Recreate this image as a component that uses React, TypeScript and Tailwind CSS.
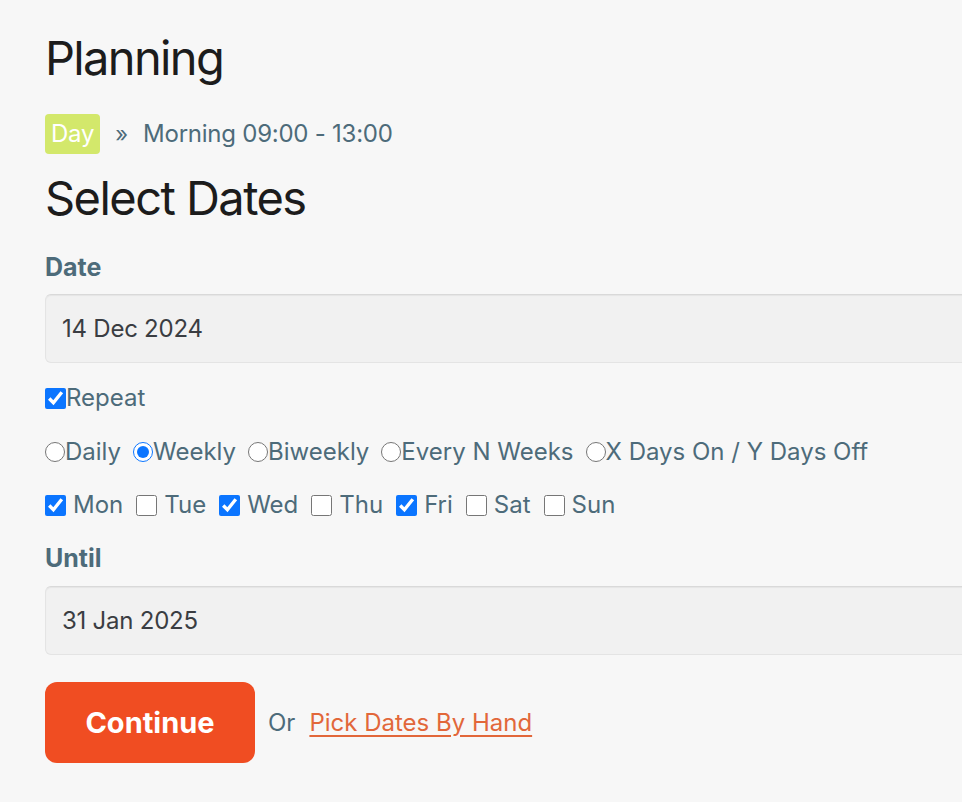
import React, { useState } from 'react';

const FREQUENCIES = ['Daily', 'Weekly', 'Biweekly', 'Every N Weeks', 'X Days On / Y Days Off'];
const DAYS = ['Mon', 'Tue', 'Wed', 'Thu', 'Fri', 'Sat', 'Sun'];

export default function App() {
  const [repeat, setRepeat] = useState(true);
  const [frequency, setFrequency] = useState('Weekly');
  const [days, setDays] = useState<Record<string, boolean>>({ Mon: true, Wed: true, Fri: true });

  return (
    <div
      className="w-[962px] h-[802px] overflow-hidden bg-[#f7f7f7] text-[#4d6b7a]"
      style={{ fontFamily: 'Inter, "Noto Sans", sans-serif' }}
    >
      <div className="pl-[45px] pt-[28px]">
        <h1 className="text-[47px] leading-[60px] tracking-[-0.035em] text-[#1c1c1c] font-normal">Planning</h1>

        <div className="mt-[26px] flex items-center h-[40px] text-[24px]">
          <span className="h-[40px] px-[6px] rounded-[4px] bg-[#d3e86b] text-white flex items-center tracking-[-0.01em]">
            Day
          </span>
          <span className="ml-[15px] mr-[15px] text-[22px]">»</span>
          <span className="tracking-[-0.01em]">Morning 09:00 - 13:00</span>
        </div>

        <h2 className="mt-[14px] text-[47px] leading-[60px] tracking-[-0.033em] text-[#1c1c1c] font-normal">
          Select Dates
        </h2>

        <div className="mt-[24px] text-[25px] font-bold leading-[30px]">Date</div>
        <div className="mt-[12px] w-[940px] h-[69px] rounded-[6px] border border-[#e4e4e4] border-t-[#d9d9d9] bg-[#f1f1f1] shadow-[inset_0_1px_1px_rgba(0,0,0,0.05)] flex items-center pl-[16px] text-[24px] text-[#3a3d42] tracking-[-0.01em]">
          14 Dec 2024
        </div>

        <label className="mt-[22px] flex items-center h-[26px] text-[24px]">
          <input
            type="checkbox"
            checked={repeat}
            onChange={(e) => setRepeat(e.target.checked)}
            className="w-[21px] h-[21px] m-0 accent-[#0b75ff]"
          />
          Repeat
        </label>

        <div className="mt-[28px] flex items-center h-[26px] text-[24px] gap-[12px]">
          {FREQUENCIES.map((f) => (
            <label key={f} className="flex items-center">
              <input
                type="radio"
                name="frequency"
                checked={frequency === f}
                onChange={() => setFrequency(f)}
                className="w-[20px] h-[20px] m-0 accent-[#0b75ff]"
              />
              {f}
            </label>
          ))}
        </div>

        <div className="mt-[27px] flex items-center h-[26px] text-[24px] gap-[13px]">
          {DAYS.map((d) => (
            <label key={d} className="flex items-center gap-[7px]">
              <input
                type="checkbox"
                checked={!!days[d]}
                onChange={(e) => setDays((p) => ({ ...p, [d]: e.target.checked }))}
                className="w-[21px] h-[21px] m-0 accent-[#0b75ff]"
              />
              {d}
            </label>
          ))}
        </div>

        <div className="mt-[25px] text-[25px] font-bold leading-[30px]">Until</div>
        <div className="mt-[13px] w-[940px] h-[69px] rounded-[6px] border border-[#e4e4e4] border-t-[#d9d9d9] bg-[#f1f1f1] shadow-[inset_0_1px_1px_rgba(0,0,0,0.05)] flex items-center pl-[16px] text-[24px] text-[#3a3d42] tracking-[-0.01em]">
          31 Jan 2025
        </div>

        <div className="mt-[27px] flex items-center">
          <button className="w-[210px] h-[81px] rounded-[12px] bg-[#f04d22] text-white text-[29px] font-bold">
            Continue
          </button>
          <span className="ml-[13px] text-[24px]">Or</span>
          <a href="#" className="ml-[14px] text-[24px] text-[#e2673a] underline underline-offset-[4px]">
            Pick Dates By Hand
          </a>
        </div>
      </div>
    </div>
  );
}
